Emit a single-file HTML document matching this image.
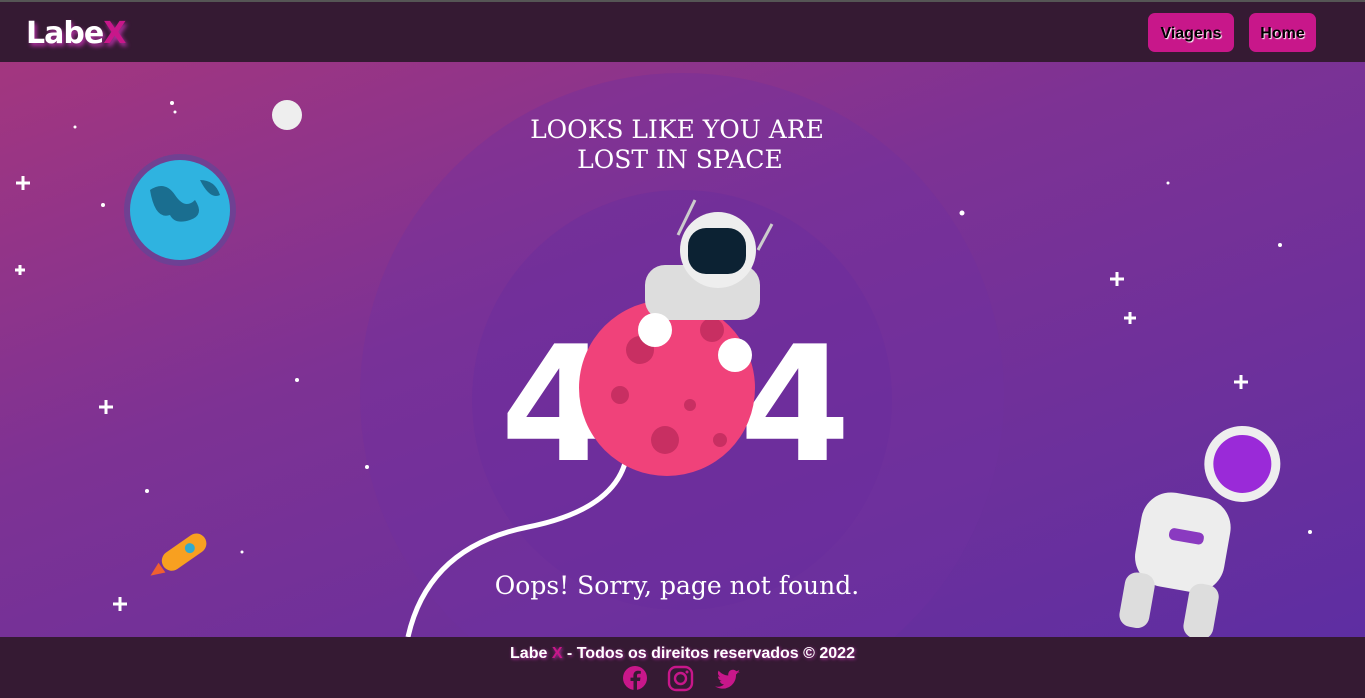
<!DOCTYPE html>
<html><head><meta charset="utf-8"><style>
*{margin:0;padding:0;box-sizing:border-box}
body{width:1365px;height:698px;overflow:hidden;font-family:"Liberation Sans",sans-serif;background:#351a33}
.top{height:2px;background:#555}
header{height:60px;background:#351a33;position:relative}
.logo{position:absolute;left:26px;top:14px;font-family:"DejaVu Sans",sans-serif;font-weight:bold;font-size:30px;color:#fff;text-shadow:2px 3px 4px #b030a0;letter-spacing:-1px}
.logo span{color:#c8178a}
.btn{position:absolute;top:11px;height:39px;background:#c8178a;border-radius:7px;font-weight:bold;font-size:16px;color:#000;line-height:42px;text-align:center;text-shadow:1px 1px 1px #fff}
main{position:absolute;top:62px;left:0;width:1365px;height:575px;background:linear-gradient(160deg,#a3367f 0%,#7d3294 40%,#5e2ea2 100%);overflow:hidden}
footer{position:absolute;top:637px;left:0;width:1365px;height:61px;background:#351a33;text-align:center}
.ft{color:#fff;font-family:"Liberation Sans",sans-serif;font-weight:bold;font-size:16px;padding-top:8px;text-shadow:1px 1px 3px #b030a0}
.ft span{color:#c8178a}
</style></head><body>
<div class="top"></div>
<header><div class="logo">Labe<span>X</span></div>
<div class="btn" style="left:1148px;width:86px">Viagens</div>
<div class="btn" style="left:1249px;width:67px">Home</div></header>
<main>
<svg width="1365" height="575" viewBox="0 62 1365 575" style="position:absolute;left:0;top:0">
<circle cx="682" cy="395" r="322" fill="#7030a0" opacity=".35"/>
<circle cx="682" cy="400" r="210" fill="#6a2c9e" opacity=".4"/>
<g fill="#fff">
<circle cx="172" cy="103" r="2"/><circle cx="175" cy="112" r="1.5"/><circle cx="103" cy="205" r="2"/><circle cx="75" cy="127" r="1.5"/><circle cx="297" cy="380" r="2"/><circle cx="147" cy="491" r="2"/><circle cx="962" cy="213" r="2.5"/><circle cx="1280" cy="245" r="2"/><circle cx="1168" cy="183" r="1.5"/><circle cx="1310" cy="532" r="2"/><circle cx="367" cy="467" r="2"/><circle cx="242" cy="552" r="1.5"/>
<path d="M23 176v14M16 183h14M106 400v14M99 407h14M120 597v14M113 604h14M1117 272v14M1110 279h14M1130 312v12M1124 318h12M1241 375v14M1234 382h14M20 265v10M15 270h10" stroke="#fff" stroke-width="3"/>
</g>
<circle cx="287" cy="115" r="15" fill="#eee"/>
<circle cx="180" cy="210" r="56" fill="#5a4a9a" opacity=".6"/>
<circle cx="180" cy="210" r="50" fill="#2fb3e0"/>
<path d="M150 190q15-10 25 5t20 5q10 15-5 20t-20-5q-15 5-20-25zM200 180q15 0 20 15-10 5-20-15z" fill="#1a6e90"/>
<g transform="translate(180 555) rotate(55)"><rect x="-10" y="-30" width="20" height="50" rx="10" fill="#f8a020"/><circle cx="0" cy="-12" r="5" fill="#3ac"/><path d="M-6 22l6 14 6-14z" fill="#f06030"/></g>
<text x="677" y="138" text-anchor="middle" font-family="DejaVu Serif,serif" font-size="25" fill="#fff">LOOKS LIKE YOU ARE</text>
<text x="680" y="168" text-anchor="middle" font-family="DejaVu Serif,serif" font-size="25" fill="#fff">LOST IN SPACE</text>
<text x="556" y="460" text-anchor="middle" font-family="DejaVu Sans,sans-serif" font-weight="bold" font-size="160" fill="#fff">4</text>
<text x="795" y="460" text-anchor="middle" font-family="DejaVu Sans,sans-serif" font-weight="bold" font-size="160" fill="#fff">4</text>
<path d="M408 637q20-90 120-110t100-85" stroke="#fff" stroke-width="5" fill="none"/>
<circle cx="667" cy="388" r="88" fill="#f0427a"/>
<g fill="#c82f62"><circle cx="640" cy="350" r="14"/><circle cx="712" cy="330" r="12"/><circle cx="665" cy="440" r="14"/><circle cx="620" cy="395" r="9"/><circle cx="690" cy="405" r="6"/><circle cx="720" cy="440" r="7"/></g>
<rect x="645" y="265" width="115" height="55" rx="20" fill="#ddd"/>
<circle cx="718" cy="250" r="38" fill="#eee"/>
<rect x="688" y="228" width="58" height="46" rx="18" fill="#0c2233"/>
<line x1="678" y1="235" x2="695" y2="200" stroke="#ccc" stroke-width="3"/><line x1="758" y1="250" x2="772" y2="224" stroke="#ccc" stroke-width="3"/>
<circle cx="655" cy="330" r="17" fill="#fff"/><circle cx="735" cy="355" r="17" fill="#fff"/>
<text x="677" y="594" text-anchor="middle" font-family="DejaVu Serif,serif" font-size="25" fill="#fff">Oops! Sorry, page not found.</text>
<g transform="translate(1185 530) rotate(10)">
<rect x="-45" y="-35" width="90" height="95" rx="30" fill="#ededed"/>
<circle cx="45" cy="-75" r="38" fill="#eee"/><circle cx="45" cy="-75" r="29" fill="#9a2ad8"/>
<rect x="-50" y="50" width="30" height="55" rx="12" fill="#ddd"/><rect x="15" y="50" width="30" height="55" rx="12" fill="#ddd"/>
<rect x="-15" y="0" width="35" height="12" rx="5" fill="#8a3ac0"/>
</g>
</svg>
</main>
<footer><div class="ft">Labe <span>X</span> - Todos os direitos reservados © 2022</div>
<svg width="130" height="30" viewBox="0 0 130 30" style="display:block;margin:2px auto 0">
<circle cx="17" cy="13" r="12" fill="#c8178a"/><path d="M19 26v-10h3l.5-3.5H19v-2c0-1 .4-1.7 1.8-1.7h2V6c-.5 0-1.6-.2-2.9-.2-2.8 0-4.5 1.7-4.5 4.8v2H12.5V16h3v10z" fill="#351a33"/>
<rect x="51" y="2" width="23" height="23" rx="7" fill="none" stroke="#c8178a" stroke-width="2.4"/><circle cx="62.5" cy="13.5" r="5.5" fill="none" stroke="#c8178a" stroke-width="2.4"/><circle cx="69" cy="7" r="1.5" fill="#c8178a"/>
<path d="M120 6c-.9.4-1.8.6-2.7.7 1-.6 1.7-1.5 2-2.6-.9.5-1.9.9-3 1.1a4.7 4.7 0 0 0-8 4.3c-3.9-.2-7.400-2.100-9.700-4.900-1.300 2.200-.6 4.900 1.500 6.300-.8 0-1.500-.2-2.100-.6 0 2.300 1.600 4.300 3.800 4.700-.7.200-1.400.200-2.100.100.600 1.900 2.400 3.200 4.400 3.300A9.500 9.500 0 0 1 95 20.300 13.400 13.400 0 0 0 116 9.100V8.500c.9-.7 1.700-1.500 2.300-2.500z" fill="#c8178a" transform="translate(2 1)"/>
</svg>
</footer>
</body></html>
